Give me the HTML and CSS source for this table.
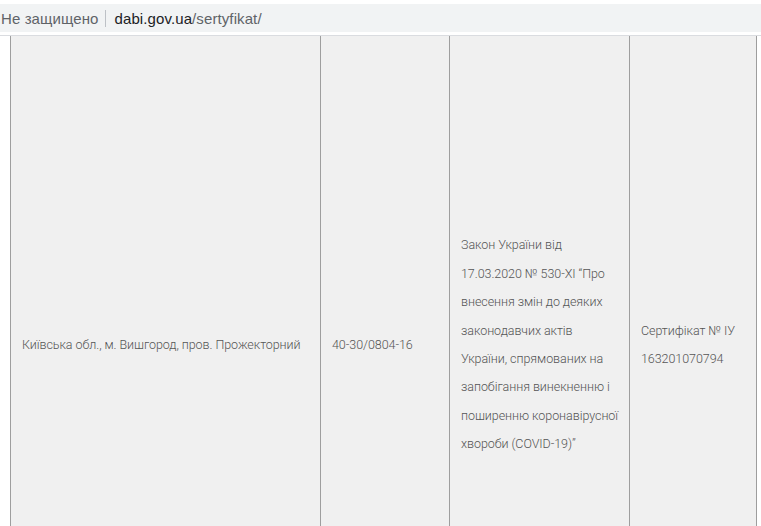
FILE: index.html
```html
<!DOCTYPE html>
<html lang="uk">
<head>
<meta charset="utf-8">
<link rel="stylesheet" href="styles.css">
</head>
<body>
<div class="bar">
  <span class="insecure">Не защищено</span><span class="sep"></span><span class="host">dabi.gov.ua</span><span class="path">/sertyfikat/</span>
</div>
<div class="gap"></div>
<table class="grid">
  <colgroup>
    <col class="c1"><col class="c2"><col class="c3"><col class="c4">
  </colgroup>
  <tr>
    <td>Київська обл., м. Вишгород, пров. Прожекторний</td>
    <td>40-30/0804-16</td>
    <td class="law">Закон України від 17.03.2020 № 530-XI “Про внесення змін до деяких законодавчих актів України, спрямованих на запобігання винекненню і поширенню коронавірусної хвороби (COVID-19)”</td>
    <td>Сертифікат № ІУ 163201070794</td>
  </tr>
</table>
</body>
</html>
```
FILE: styles.css
```css
html, body {
  margin: 0;
  padding: 0;
  background: #ffffff;
  overflow: hidden;
}
.bar {
  margin-top: 4px;
  height: 28px;
  background: #f1f3f4;
  display: flex;
  align-items: center;
  padding-left: 1px;
  font-family: "Liberation Sans", Arial, sans-serif;
  font-size: 15px;
  letter-spacing: 0.1px;
  white-space: nowrap;
}
.insecure { color: #5f6368; }
.sep {
  display: inline-block;
  width: 1px;
  height: 17px;
  background: #bdc1c6;
  margin: 0 9px 0 6px;
}
.host { color: #202124; }
.path { color: #5f6368; }
.gap {
  height: 3px;
  border-bottom: 1px solid #dadce0;
}
.grid {
  margin-left: 10px;
  border-collapse: collapse;
  table-layout: fixed;
  width: 747px;
  font-family: Roboto, "Noto Sans", sans-serif;
  font-weight: 300;
  font-size: 12.5px;
  letter-spacing: -0.06px;
  color: #555555;
  line-height: 28.4px;
}
.c1 { width: 310px; }
.c2 { width: 129px; }
.c3 { width: 180px; }
.c4 { width: 127px; }
.grid td {
  background: #f0f0f0;
  border-left: 1px solid #9e9e9e;
  border-right: 1px solid #9e9e9e;
  padding: 0 10px 0 11px;
  height: 618px;
  vertical-align: middle;
}
.grid td.law {
  padding-right: 8px;
}
```
